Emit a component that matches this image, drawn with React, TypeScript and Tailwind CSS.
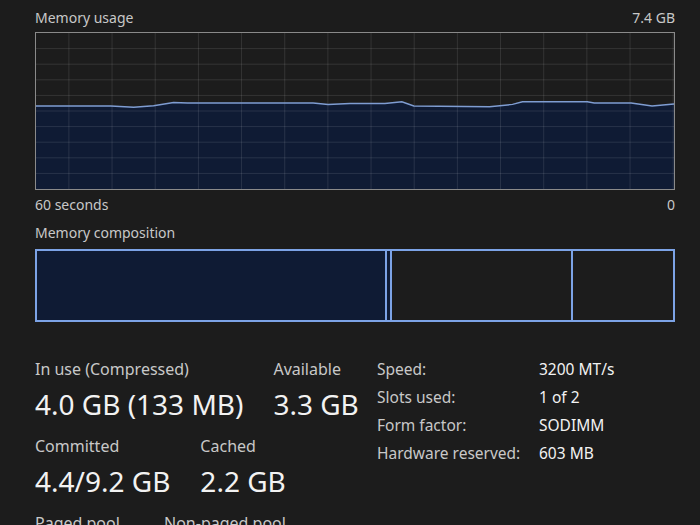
const usage: [number, number][] = [
  [0, 74], [75, 74], [98, 75.3], [118, 73.7], [138, 70.3], [152, 71], [278, 71],
  [293, 72.3], [315, 71.3], [350, 71.3], [367, 69.7], [379, 74], [455, 74.7],
  [478, 72.3], [488, 69.7], [553, 69.7], [560, 71], [597, 71], [618, 74], [640, 72],
];

const W = 640;
const H = 158;

function UsageChart() {
  const line = usage.map(([x, y], i) => `${i ? 'L' : 'M'}${x} ${y}`).join(' ');
  const area = `${line} L${W} ${H} L0 ${H} Z`;
  const rows = Array.from({ length: 9 }, (_, i) => (i + 1) * (H / 10));
  const cols = Array.from({ length: 15 }, (_, i) => 33 + i * 43.3).filter((x) => x < W);

  return (
    <div className="h-[158px] border border-[#8a8a8a]">
      <svg width="100%" height="100%" viewBox={`0 0 ${W} ${H}`} preserveAspectRatio="none" className="block">
        <path d={area} fill="#0f1b34" />
        {rows.map((y) => (
          <line key={y} x1={0} x2={W} y1={y} y2={y} stroke="#ffffff" strokeOpacity={0.11} strokeWidth={1} />
        ))}
        {cols.map((x) => (
          <line key={x} x1={x} x2={x} y1={0} y2={H} stroke="#ffffff" strokeOpacity={0.11} strokeWidth={1} />
        ))}
        <path d={line} fill="none" stroke="#7f9dd2" strokeWidth={1.5} />
      </svg>
    </div>
  );
}

function Composition() {
  return (
    <div className="flex h-[73px]">
      <div className="w-[352px] border-2 border-[#7ca3e6] bg-[#0f1b34]" />
      <div className="w-[5px] border-y-2 border-r-2 border-[#7ca3e6] bg-[#0f1b34]" />
      <div className="w-[181px] border-y-2 border-r-2 border-[#7ca3e6]" />
      <div className="flex-1 border-y-2 border-r-2 border-[#7ca3e6]" />
    </div>
  );
}

function Stat({ label, value, className = '' }: { label: string; value: string; className?: string }) {
  return (
    <div className={`flex flex-col ${className}`}>
      <span className="text-[16px] leading-[20px] text-[#c8c8c8] whitespace-nowrap">{label}</span>
      <span className="mt-[8px] text-[28px] leading-[34px] text-[#f2f2f2] whitespace-nowrap">{value}</span>
    </div>
  );
}

const specs = [
  ['Speed:', '3200 MT/s'],
  ['Slots used:', '1 of 2'],
  ['Form factor:', 'SODIMM'],
  ['Hardware reserved:', '603 MB'],
];

export default function App() {
  return (
    <div
      className="w-[700px] h-[525px] overflow-hidden bg-[#1c1c1c] pl-[35px] pr-[25px] pt-[8px]"
      style={{ fontFamily: '"Noto Sans", "Open Sans", sans-serif' }}
    >
      <div className="flex justify-between text-[14px] leading-[20px] text-[#c8c8c8]">
        <span>Memory usage</span>
        <span>7.4 GB</span>
      </div>
      <div className="mt-[4px]">
        <UsageChart />
      </div>
      <div className="mt-[5px] flex justify-between text-[14px] leading-[20px] text-[#c8c8c8]">
        <span>60 seconds</span>
        <span>0</span>
      </div>
      <div className="mt-[8px] text-[14px] leading-[20px] text-[#c8c8c8]">Memory composition</div>
      <div className="mt-[6px]">
        <Composition />
      </div>

      <div className="mt-[33px] flex">
        <div className="w-[342px] pt-[4px] flex flex-col gap-[15px]">
          <div className="flex gap-[30px]">
            <Stat label="In use (Compressed)" value="4.0 GB (133 MB)" />
            <Stat label="Available" value="3.3 GB" />
          </div>
          <div className="flex gap-[30px]">
            <Stat label="Committed" value="4.4/9.2 GB" />
            <Stat label="Cached" value="2.2 GB" />
          </div>
          <div className="flex gap-[30px]">
            <Stat label="Paged pool" value="" className="w-[99px]" />
            <Stat label="Non-paged pool" value="" />
          </div>
        </div>
        <div className="flex flex-col text-[15.5px] leading-[28px]">
          {specs.map(([k, v]) => (
            <div key={k} className="flex">
              <span className="w-[162px] text-[#c8c8c8]">{k}</span>
              <span className="text-[#f2f2f2]">{v}</span>
            </div>
          ))}
        </div>
      </div>
    </div>
  );
}
